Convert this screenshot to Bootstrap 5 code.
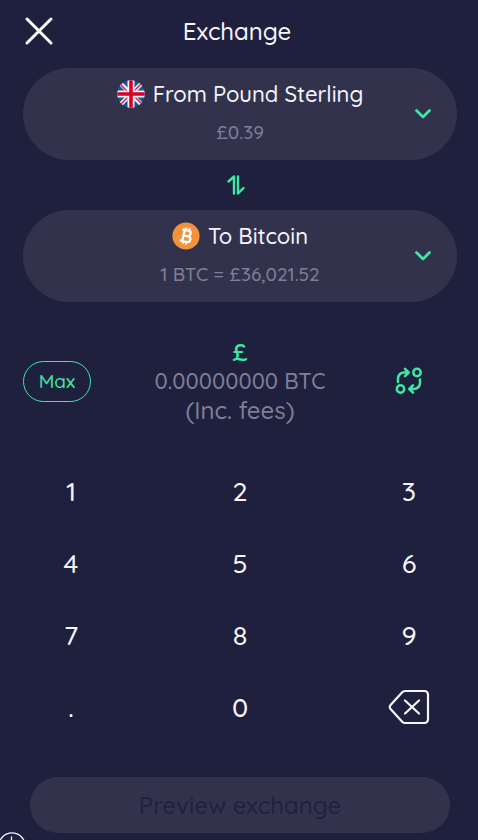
<!DOCTYPE html>
<html lang="en">
<head>
<meta charset="utf-8">
<meta name="viewport" content="width=device-width, initial-scale=1">
<title>Exchange</title>
<link href="https://cdn.jsdelivr.net/npm/bootstrap@5.3.0/dist/css/bootstrap.min.css" rel="stylesheet">
<style>
  :root { --night: #1f203d; --panel: #33324d; --mint: #3ce8a4; --muted: #807e99; --light: #f5f5ff; }
  body { background: var(--night); color: var(--light); font-family: Quicksand, Inter, "Noto Sans", sans-serif; font-weight: 500; overflow-x: hidden; }
  button { font-family: inherit; font-weight: inherit; color: inherit; }
  svg { display: block; flex: none; }
  .screen { padding: 7px 21px 7px 23px; }
  .plain-btn { background: none; border: 0; padding: 0; }
  .triple { display: grid; grid-template-columns: 96px 1fr 96px; align-items: center; }
  .screen-title { font-size: 24px; line-height: 32px; font-weight: 500; padding-right: 6px; }
  .top-bar { height: 48px; margin-bottom: 13px; }
  .currency { background: var(--panel); border: 0; border-radius: 46px; padding: 12px 24px 16px; display: grid; grid-template-columns: 20px 1fr 20px; align-items: center; min-height: 92px; }
  .currency-name { font-size: 22px; line-height: 28px; }
  .currency-note { font-size: 19px; line-height: 24px; color: var(--muted); margin-top: 12px; }
  .swap { height: 50px; }
  .amount { margin-top: 36px; }
  .amount-symbol { font-size: 24px; line-height: 28px; font-weight: 600; color: var(--mint); }
  .amount-value { font-size: 22px; line-height: 30px; color: var(--muted); }
  .amount-fees { font-size: 24px; line-height: 28px; color: var(--muted); }
  .max-btn { width: 68px; height: 41px; font-size: 19px; line-height: 24px; color: var(--mint); border: 1px solid var(--mint); border-radius: 21px; background: none; }
  .keypad { margin-top: 31px; grid-auto-rows: 72px; }
  .keypad button { font-size: 27px; height: 72px; }
  .preview { background: var(--panel); color: #20213f; border: 0; border-radius: 28px; height: 56px; margin: 34px 7px 0; font-size: 24px; }
  .help { position: fixed; left: -2px; bottom: -20px; }
</style>
<script src="https://cdn.jsdelivr.net/npm/bootstrap@5.3.0/dist/js/bootstrap.bundle.min.js"></script>
</head>
<body>
<main class="screen d-flex flex-column">
  <header class="triple top-bar">
    <button class="plain-btn" type="button" aria-label="Close">
      <svg width="32" height="32" viewBox="0 0 32 32" fill="none" stroke="#fff" stroke-width="3" stroke-linecap="round"><path d="M4 4 28 28M28 4 4 28"/></svg>
    </button>
    <h1 class="screen-title text-center m-0">Exchange</h1>
  </header>

  <button class="currency w-100" type="button">
    <span></span>
    <span class="d-block text-center">
      <span class="currency-name d-flex justify-content-center align-items-center gap-2">
        <svg width="28" height="28" viewBox="0 0 28 28"><defs><clipPath id="disc"><circle cx="14" cy="14" r="13.7"/></clipPath></defs>
          <g clip-path="url(#disc)"><path fill="#15559f" d="M0 0h28v28H0z"/><path d="M2 2 26 26M26 2 2 26" stroke="#f5edf4" stroke-width="4.4"/><path d="M2 3 12 13M17 11 25 3M11 17 3 25M16 15 26 25" stroke="#d22846" stroke-width="1.5"/><path d="M14 0v28M0 14h28" stroke="#f8f0f6" stroke-width="7"/><path d="M14 0v28M0 14h28" stroke="#d80027" stroke-width="3.6"/></g></svg>
        <span>From Pound Sterling</span>
      </span>
      <span class="currency-note d-block">£0.39</span>
    </span>
    <svg class="mt-1" width="20" height="12" viewBox="0 0 20 12" fill="none" stroke="#3ce8a4" stroke-width="2.8" stroke-linecap="round" stroke-linejoin="round"><path d="m3.500 2.500 6.500 6.500 6.500-6.500"/></svg>
  </button>

  <div class="swap d-flex justify-content-center align-items-center pe-2">
    <button class="plain-btn" type="button" aria-label="Swap currencies">
      <svg width="20" height="22" viewBox="0 0 20 22" fill="none" stroke="#3ce8a4" stroke-width="2.400" stroke-linecap="round" stroke-linejoin="round"><path d="M2.500 7.500 8 2.500v17M12 2.500v17l5.500-5.500"/></svg>
    </button>
  </div>

  <button class="currency w-100" type="button">
    <span></span>
    <span class="d-block text-center">
      <span class="currency-name d-flex justify-content-center align-items-center gap-2">
        <svg width="28" height="28" viewBox="0 0 28 28"><circle cx="14" cy="14" r="13.600" fill="#f2933c"/><g transform="rotate(13 14 14)" fill="none" stroke="#fff" stroke-width="2.300" stroke-linejoin="round"><path d="M9 8.300h6.200a2.700 2.700 0 0 1 0 5.500H11.500M15.500 13.800h.6a2.900 2.900 0 0 1 0 5.900H9M11.500 8.300v11.400"/><path stroke-width="1.800" d="M12.500 5.600v3M15.800 5.600v3M12.500 19.400v3M15.800 19.400v3"/></g></svg>
        <span>To Bitcoin</span>
      </span>
      <span class="currency-note d-block">1 BTC = £36,021.52</span>
    </span>
    <svg class="mt-1" width="20" height="12" viewBox="0 0 20 12" fill="none" stroke="#3ce8a4" stroke-width="2.8" stroke-linecap="round" stroke-linejoin="round"><path d="m3.500 2.500 6.500 6.500 6.500-6.500"/></svg>
  </button>

  <section class="triple amount">
    <button class="max-btn p-0" type="button">Max</button>
    <div class="text-center">
      <div class="amount-symbol">£</div>
      <div class="amount-value text-nowrap">0.00000000 BTC</div>
      <div class="amount-fees">(Inc. fees)</div>
    </div>
    <button class="plain-btn d-flex justify-content-center" type="button" aria-label="Switch amount currency">
      <svg width="28" height="28" viewBox="0 0 28 28" fill="none" stroke="#3ce8a4" stroke-width="2.500" stroke-linecap="round" stroke-linejoin="round"><circle cx="22" cy="5.500" r="3.700"/><circle cx="5.500" cy="22" r="3.700"/><path d="M3 15v-3.500a6 6 0 0 1 6-6h4.500M10 1.800l3.700 3.700L10 9.200M25 12.500V16a6 6 0 0 1-6 6h-4.500M18 18.300 14.300 22l3.700 3.700"/></svg>
    </button>
  </section>

  <section class="triple keypad" aria-label="Keypad">
    <button class="plain-btn" type="button">1</button><button class="plain-btn" type="button">2</button><button class="plain-btn" type="button">3</button>
    <button class="plain-btn" type="button">4</button><button class="plain-btn" type="button">5</button><button class="plain-btn" type="button">6</button>
    <button class="plain-btn" type="button">7</button><button class="plain-btn" type="button">8</button><button class="plain-btn" type="button">9</button>
    <button class="plain-btn" type="button">.</button><button class="plain-btn" type="button">0</button>
    <button class="plain-btn d-flex justify-content-center align-items-center" type="button" aria-label="Delete">
      <svg width="42" height="36" viewBox="0 0 42 36" fill="none" stroke="#f5f5ff" stroke-width="2.200" stroke-linecap="round" stroke-linejoin="round"><path d="M17 2h19.500a3.500 3.500 0 0 1 3.500 3.500v25a3.500 3.500 0 0 1-3.500 3.500H17a4 4 0 0 1-2.800-1.200L2.600 20a2.800 2.800 0 0 1 0-4L14.200 3.200A4 4 0 0 1 17 2Z"/><path d="m17 11.500 14 13M31 11.500l-14 13"/></svg>
    </button>
  </section>

  <button class="preview" type="button">Preview exchange</button>
</main>
<button class="plain-btn help" type="button" aria-label="More">
  <svg width="28" height="28" viewBox="0 0 28 28" fill="none" stroke="#f5f5ff" stroke-width="1.300"><circle cx="14" cy="14" r="13.200"/><path d="M13.500 4.500v17M9 17l4.500 4.500L18 17"/></svg>
</button>
</body>
</html>
